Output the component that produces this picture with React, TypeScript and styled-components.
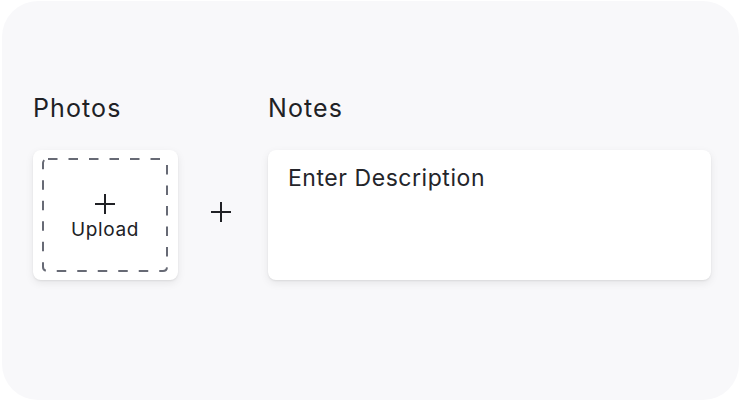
import React from "react";
import styled, { createGlobalStyle } from "styled-components";

const GlobalStyle = createGlobalStyle`
  html, body {
    margin: 0;
    padding: 0;
    background: #ffffff;
  }
  body {
    font-family: Inter, "Liberation Sans", sans-serif;
    color: #202125;
  }
`;

const Page = styled.div`
  width: 741px;
  height: 401px;
  padding: 1px 2px;
  box-sizing: border-box;
`;

const Panel = styled.div`
  height: 100%;
  box-sizing: border-box;
  background: #f8f8fa;
  border-radius: 36px;
  padding: 92px 28px 0 31px;
`;

const Row = styled.div`
  display: flex;
  align-items: flex-start;
`;

const Column = styled.div<{ $grow?: boolean }>`
  display: flex;
  flex-direction: column;
  flex: ${({ $grow }) => ($grow ? "1" : "none")};
`;

const Label = styled.div`
  font-size: 25px;
  line-height: 30px;
  letter-spacing: 1.1px;
  color: #202125;
  margin-bottom: 27px;
`;

const Card = styled.div`
  background: #ffffff;
  border-radius: 8px;
  box-shadow: 0 1px 2px rgba(0, 0, 0, 0.07), 0 3px 9px rgba(0, 0, 0, 0.08);
  height: 130px;
  box-sizing: border-box;
`;

const UploadCard = styled(Card)`
  width: 145px;
  padding: 8px 10px 8px 9px;
`;

const DropZone = styled.div`
  position: relative;
  height: 100%;
  display: flex;
  flex-direction: column;
  align-items: center;
  justify-content: center;
  padding-top: 4px;
  box-sizing: border-box;
`;

const DashFrame = styled.svg`
  position: absolute;
  inset: 0;
  width: 100%;
  height: 100%;
  overflow: visible;
`;

const PlusIcon = styled.svg<{ $size: number }>`
  width: ${({ $size }) => $size}px;
  height: ${({ $size }) => $size}px;
  display: block;
`;

const UploadText = styled.span`
  font-size: 19px;
  line-height: 22px;
  letter-spacing: 0.6px;
  margin-top: 5px;
`;

const PlusSlot = styled.div`
  width: 90px;
  height: 130px;
  margin-top: 57px;
  display: flex;
  align-items: center;
  justify-content: center;
  padding: 0 4px 6px 0;
  box-sizing: border-box;
`;

const NotesCard = styled(Card)`
  padding: 13px 20px;
  font-size: 23px;
  line-height: 30px;
  letter-spacing: 0.55px;
  color: #24252a;
`;

const Plus = ({ size }: { size: number }) => (
  <PlusIcon $size={size} viewBox={`0 0 ${size} ${size}`}>
    <path
      d={`M${size / 2} 0V${size}M0 ${size / 2}H${size}`}
      stroke="#202125"
      strokeWidth="2"
      fill="none"
    />
  </PlusIcon>
);

export default function App() {
  return (
    <>
      <GlobalStyle />
      <Page>
        <Panel>
          <Row>
            <Column>
              <Label>Photos</Label>
              <UploadCard>
                <DropZone>
                  <DashFrame>
                    <rect
                      x="1"
                      y="1"
                      width="calc(100% - 2px)"
                      height="calc(100% - 2px)"
                      rx="4"
                      fill="none"
                      stroke="#676a75"
                      strokeWidth="2"
                      strokeDasharray="9.5 11"
                      strokeDashoffset="19.5"
                    />
                  </DashFrame>
                  <Plus size={20} />
                  <UploadText>Upload</UploadText>
                </DropZone>
              </UploadCard>
            </Column>
            <PlusSlot>
              <Plus size={20} />
            </PlusSlot>
            <Column $grow>
              <Label>Notes</Label>
              <NotesCard>Enter Description</NotesCard>
            </Column>
          </Row>
        </Panel>
      </Page>
    </>
  );
}
